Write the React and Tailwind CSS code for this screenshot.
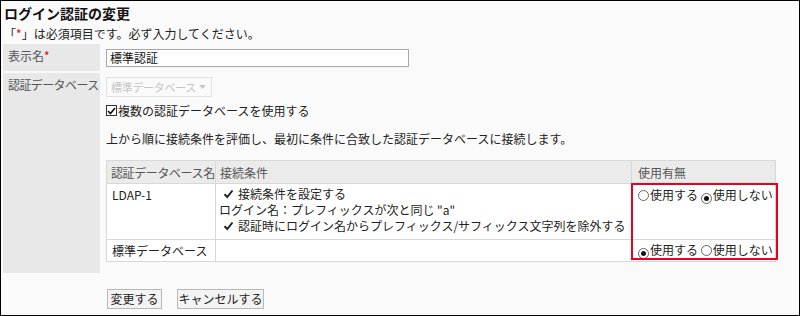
import React from "react";

function Radio({ checked }) {
  return (
    <span className="inline-flex items-center justify-center w-[11px] h-[11px] rounded-full border border-[#666] bg-white mr-[1px] align-[-1px]">
      {checked && <span className="block w-[5px] h-[5px] rounded-full bg-[#111]" />}
    </span>
  );
}

function Check() {
  return (
    <svg width="11" height="10" viewBox="0 0 11 10" className="inline-block mr-[4px] shrink-0">
      <path d="M1.5 5.2 L4.3 8 L9.5 1.5" fill="none" stroke="#222" strokeWidth="2" />
    </svg>
  );
}

export default function App() {
  return (
    <div className="w-[800px] h-[316px] box-border border border-black bg-[#fafafa] text-[12px] text-[#333] font-['Noto_Sans_CJK_JP','Noto_Sans',sans-serif] overflow-hidden">
      <div className="ml-[3px] mt-[2px] h-[20px] leading-[20px] text-[14px] font-bold text-[#111]">
        ログイン認証の変更
      </div>
      <div className="ml-[3px] mt-[3px] h-[16px] leading-[16px] text-[#222]">
        「<span className="text-[#e00]">*</span>」は必須項目です。必ず入力してください。
      </div>

      <div className="mt-[2px] ml-[2px]">
        <div className="flex">
          <div className="w-[97px] h-[27px] bg-[#e8e8e8] pl-[5px] pt-[4px] leading-[15px] text-[#555] whitespace-nowrap">
            表示名<span className="text-[#e00]">*</span>
          </div>
          <div className="ml-[6px] pt-[5px]">
            <div className="w-[303px] h-[18px] border border-[#a8a8a8] bg-white pl-[3px] leading-[16px] text-[#111]">
              標準認証
            </div>
          </div>
        </div>

        <div className="flex mt-[2px]">
          <div className="w-[97px] bg-[#e8e8e8] pl-[5px] pt-[4px] leading-[15px] text-[#555] whitespace-nowrap tracking-[-0.6px]">
            認証データベース
          </div>
          <div className="ml-[6px] pt-[4px] pb-[11px]">
            <div className="w-[106px] h-[20px] border border-[#e2e2e2] bg-[#fafafa] flex items-center pl-[4px] text-[11px] text-[#c4c4c4] leading-[18px] whitespace-nowrap tracking-[-0.3px]">
              標準データベース
              <svg width="7" height="4" viewBox="0 0 8 5" className="ml-[3px] shrink-0">
                <path d="M0 0 L8 0 L4 5 Z" fill="#c4c4c4" />
              </svg>
            </div>
            <div className="mt-[6px] h-[15px] leading-[15px] flex items-center text-[#222]">
              <span className="inline-flex items-center justify-center w-[11px] h-[11px] border border-[#333] bg-white mr-[1px]">
                <svg width="9" height="8" viewBox="0 0 9 8">
                  <path d="M1 4 L3.5 6.5 L8 1" fill="none" stroke="#111" strokeWidth="1.6" />
                </svg>
              </span>
              複数の認証データベースを使用する
            </div>
            <div className="mt-[13px] h-[15px] leading-[15px] text-[#222]">
              上から順に接続条件を評価し、最初に条件に合致した認証データベースに接続します。
            </div>

            <div className="relative mt-[14px]">
              <table className="w-[669px] border-collapse table-fixed">
                <colgroup>
                  <col className="w-[109px]" />
                  <col className="w-[416px]" />
                  <col className="w-[144px]" />
                </colgroup>
                <thead>
                  <tr className="h-[23px] bg-[#ebebeb] text-[#555]">
                    <th className="border border-[#d8d8d8] font-normal text-left pl-[4px] leading-[15px] whitespace-nowrap tracking-[-0.4px]">認証データベース名</th>
                    <th className="border border-[#d8d8d8] font-normal text-left pl-[4px] leading-[15px]">接続条件</th>
                    <th className="border border-[#d8d8d8] font-normal text-left pl-[6px] leading-[15px]">使用有無</th>
                  </tr>
                </thead>
                <tbody className="bg-white text-[#222]">
                  <tr className="h-[56px]">
                    <td className="border border-[#d8d8d8] align-top pl-[5px] pt-[3px] leading-[15px]">LDAP-1</td>
                    <td className="border border-[#d8d8d8] align-top pl-[3px] pt-[2px] pb-[4px] whitespace-nowrap">
                      <div className="pl-[4px] h-[16px] leading-[16px] flex items-center"><Check /><span>接続条件を設定する</span></div>
                      <div className="h-[16px] leading-[16px]">ログイン名：プレフィックスが次と同じ "a"</div>
                      <div className="pl-[4px] h-[16px] leading-[16px] flex items-center"><Check /><span>認証時にログイン名からプレフィックス/サフィックス文字列を除外する</span></div>
                    </td>
                    <td className="border border-[#d8d8d8] align-top pl-[6px] pt-[3px] leading-[15px] whitespace-nowrap">
                      <Radio />使用する <Radio checked />使用しない
                    </td>
                  </tr>
                  <tr className="h-[22px]">
                    <td className="border border-[#d8d8d8] pl-[5px] leading-[15px] whitespace-nowrap">標準データベース</td>
                    <td className="border border-[#d8d8d8]"></td>
                    <td className="border border-[#d8d8d8] pl-[6px] leading-[15px] whitespace-nowrap">
                      <Radio checked />使用する <Radio />使用しない
                    </td>
                  </tr>
                </tbody>
              </table>
              <div className="absolute left-[525px] top-[23px] w-[147px] h-[77px] border-2 border-[#e8001c] pointer-events-none" />
            </div>
          </div>
        </div>
      </div>

      <div className="flex ml-[106px] mt-[16px] gap-[15px]">
        <button className="w-[55px] h-[20px] border border-[#b8b8b8] bg-[#f3f3f3] text-[12px] leading-[16px] text-[#222]">
          変更する
        </button>
        <button className="w-[87px] h-[20px] border border-[#b8b8b8] bg-[#f3f3f3] text-[12px] leading-[16px] text-[#222]">
          キャンセルする
        </button>
      </div>
    </div>
  );
}
